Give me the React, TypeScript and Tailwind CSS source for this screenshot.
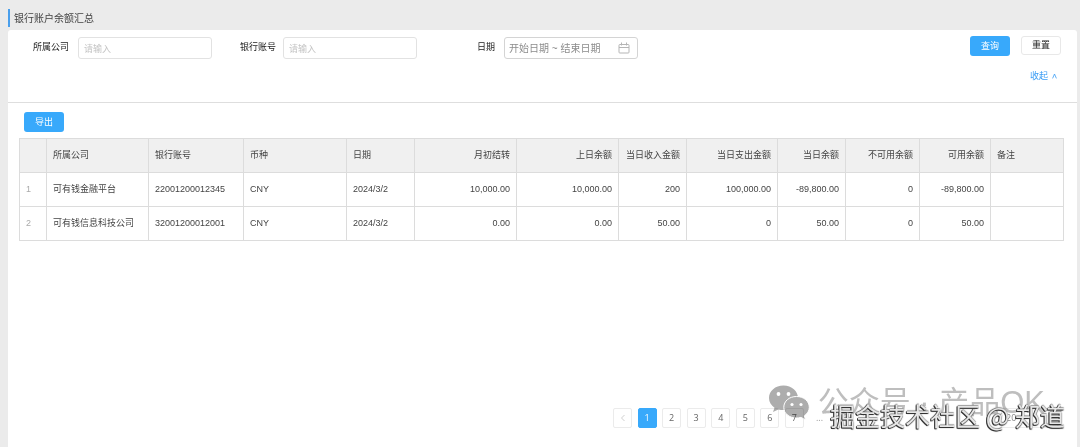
import { useState } from "react";

interface AccountRow {
  company: string;
  account: string;
  currency: string;
  date: string;
  amounts: string[];
}

const columns = [
  { title: "", width: "w-[27px]", right: false },
  { title: "所属公司", width: "w-[102px]", right: false },
  { title: "银行账号", width: "w-[95px]", right: false },
  { title: "币种", width: "w-[103px]", right: false },
  { title: "日期", width: "w-[68px]", right: false },
  { title: "月初结转", width: "w-[102px]", right: true },
  { title: "上日余额", width: "w-[102px]", right: true },
  { title: "当日收入金额", width: "w-[68px]", right: true },
  { title: "当日支出金额", width: "w-[91px]", right: true },
  { title: "当日余额", width: "w-[68px]", right: true },
  { title: "不可用余额", width: "w-[74px]", right: true },
  { title: "可用余额", width: "w-[71px]", right: true },
  { title: "备注", width: "w-[73px]", right: false },
];

const rows: AccountRow[] = [
  {
    company: "可有钱金融平台",
    account: "22001200012345",
    currency: "CNY",
    date: "2024/3/2",
    amounts: ["10,000.00", "10,000.00", "200", "100,000.00", "-89,800.00", "0", "-89,800.00"],
  },
  {
    company: "可有钱信息科技公司",
    account: "32001200012001",
    currency: "CNY",
    date: "2024/3/2",
    amounts: ["0.00", "0.00", "50.00", "0", "50.00", "0", "50.00"],
  },
];

const pages = [1, 2, 3, 4, 5, 6, 7];

function SearchForm() {
  const inputClass =
    "h-[22px] w-[134px] rounded-[3px] border border-[#e2e2e2] bg-white px-[5px] pt-0.5 text-[9px] text-[#333] outline-none placeholder:text-[#c4c4c4]";

  return (
    <form
      onSubmit={(e) => e.preventDefault()}
      className="flex items-start border-b border-[#dedede] pt-1.5 pr-4 pb-[18px] pl-[25px] text-[9px] text-[#222]"
    >
      <div className="flex flex-wrap gap-7 pt-px">
        <div className="flex gap-[9px]">
          <label htmlFor="company" className="leading-5">所属公司</label>
          <input id="company" type="text" placeholder="请输入" className={inputClass} />
        </div>
        <div className="flex gap-[7px]">
          <label htmlFor="account" className="leading-5">银行账号</label>
          <input id="account" type="text" placeholder="请输入" className={inputClass} />
        </div>
        <div className="ml-8 flex gap-[9px]">
          <label htmlFor="date" className="leading-5">日期</label>
          <div className="flex h-[22px] w-[134px] items-center rounded-[3px] border border-[#d4d4d4] pr-[7px] pl-1">
            <input
              id="date"
              type="text"
              placeholder="开始日期 ~ 结束日期"
              className="w-full min-w-0 text-[10px] outline-none placeholder:text-[#8c8c8c]"
            />
            <svg viewBox="0 0 12 12" className="size-3 shrink-0" fill="none" stroke="#b5b5b5">
              <rect x="1" y="2.5" width="10" height="8.5" rx="0.8" />
              <path d="M1 5.5h10M3.5 0.5v3M8.5 0.5v3" />
            </svg>
          </div>
        </div>
      </div>
      <div className="ml-auto flex flex-col items-end gap-3">
        <div className="flex gap-[11px]">
          <button type="submit" className="h-5 w-10 rounded-[3px] bg-[#38a9fb] pt-0.5 text-white">
            查询
          </button>
          <button type="reset" className="h-[19px] w-10 rounded-[3px] border border-[#e8e8e8] bg-white">
            重置
          </button>
        </div>
        <a href="#" className="mr-1 flex items-center gap-1 leading-4 text-[#3a9df5]">
          收起
          <svg viewBox="0 0 5 6" className="h-1.5 w-[5px]" fill="none" stroke="currentColor" strokeWidth="0.8">
            <path d="M0.6 5.4L2.5 1L4.400 5.4" />
          </svg>
        </a>
      </div>
    </form>
  );
}

function BalanceTable() {
  return (
    <table className="w-full table-fixed border-collapse text-[9px] text-[#444]">
      <thead>
        <tr className="h-[34px] bg-[#f0f0f0]">
          {columns.map((col, i) => (
            <th
              key={i}
              className={`border border-[#dcdcdc] px-1.5 font-normal whitespace-nowrap ${col.width} ${
                col.right ? "text-right" : "text-left"
              }`}
            >
              {col.title}
            </th>
          ))}
        </tr>
      </thead>
      <tbody>
        {rows.map((row, i) => (
          <tr key={row.account} className="h-[34px]">
            <td className="border border-[#dcdcdc] px-1.5 text-[#aaa]">{i + 1}</td>
            <td className="border border-[#dcdcdc] px-1.5 whitespace-nowrap">{row.company}</td>
            <td className="border border-[#dcdcdc] px-1.5">{row.account}</td>
            <td className="border border-[#dcdcdc] px-1.5">{row.currency}</td>
            <td className="border border-[#dcdcdc] px-1.5">{row.date}</td>
            {row.amounts.map((amount, j) => (
              <td key={j} className="border border-[#dcdcdc] px-1.5 text-right">
                {amount}
              </td>
            ))}
            <td className="border border-[#dcdcdc] px-1.5" />
          </tr>
        ))}
      </tbody>
    </table>
  );
}

function Pagination() {
  const [current, setCurrent] = useState<number>(1);

  return (
    <nav className="flex items-center font-['Open_Sans','Noto_Sans_CJK_SC',sans-serif] text-[9px] text-[#666]">
      <div className="flex w-[191px] justify-between">
        <button
          aria-label="上一页"
          onClick={() => setCurrent(Math.max(1, current - 1))}
          className="flex h-5 w-[19px] items-center justify-center rounded-[2px] border border-[#ebebeb]"
        >
          <svg viewBox="0 0 6 8" className="h-2 w-1.5" fill="none" stroke="#d0d0d0">
            <path d="M4.5 1L1.5 4L4.5 7" />
          </svg>
        </button>
        {pages.map((page) => (
          <button
            key={page}
            onClick={() => setCurrent(page)}
            className={`flex h-5 w-[19px] items-center justify-center rounded-[2px] border ${
              page === current ? "border-[#38a9fb] bg-[#38a9fb] text-white" : "border-[#ebebeb]"
            }`}
          >
            {page}
          </button>
        ))}
      </div>
      <span className="ml-3 w-[18px] text-[#999]">...</span>
      <button
        aria-label="下一页"
        onClick={() => setCurrent(Math.min(7, current + 1))}
        className="h-5 w-[19px] rounded-[2px] border border-[#ebebeb]"
      />
      <select
        aria-label="每页条数"
        className="ml-auto h-5 w-12 appearance-none rounded-[2px] border border-[#ebebeb] px-1 text-[#888]"
      >
        <option>20</option>
      </select>
    </nav>
  );
}

function Watermarks() {
  return (
    <>
      <div className="pointer-events-none absolute right-[35px] bottom-[27px] flex items-center gap-2 text-[31px] leading-8 whitespace-nowrap text-[#bebebe] mix-blend-multiply select-none">
        <svg viewBox="0 0 42 35" className="h-[35px] w-[42px]">
          <path
            fill="#adadad"
            d="M15.5 0.5C7.2 0.5 1 6 1 13c0 4 2.200 7.400 5.500 9.700L5 27l5.300-2.600c1.700.5 3.400.7 5.200.7C23.800 25.100 30 19.700 30 13S23.800.5 15.500.5z"
          />
          <path
            fill="#adadad"
            stroke="#fff"
            d="M28.500 11.500c-7.300 0-12.700 4.700-12.700 10.800s5.400 10.700 12.700 10.700c1.500 0 3-.2 4.400-.6l4.700 2.400-1.200-4c3-2 4.900-5 4.900-8.500 0-6.100-5.500-10.800-12.800-10.800z"
          />
          <g fill="#fff">
            <circle cx="10.500" cy="9" r="1.900" />
            <circle cx="20.500" cy="9" r="1.900" />
            <circle cx="24" cy="19.500" r="1.600" />
            <circle cx="33" cy="19.500" r="1.600" />
          </g>
        </svg>
        <span>公众号 · 产品OK</span>
      </div>
      <div className="pointer-events-none absolute right-[15px] bottom-3.5 font-['Noto_Sans_CJK_SC',sans-serif] text-[25px] leading-9 whitespace-nowrap text-[#e6e6e6] select-none [text-shadow:-1px_1px_0_#333,0_1px_1px_#555,-1px_0_0_#555,0_-1px_1px_#999]">
        掘金技术社区 @ 郑道
      </div>
    </>
  );
}

function App() {
  return (
    <div className="relative flex min-h-screen flex-col bg-[#ebebeb] pr-[3px] pl-2 font-['Liberation_Sans','Noto_Sans_CJK_SC',sans-serif]">
      <header className="pt-[9px] pb-[3px]">
        <h1 className="border-l-2 border-[#4a9fec] pt-0.5 pl-1 text-[10px] leading-4 text-[#444]">
          银行账户余额汇总
        </h1>
      </header>
      <main className="flex flex-1 flex-col rounded-t-[3px] bg-white">
        <SearchForm />
        <section className="flex flex-1 flex-col pr-[13px] pl-[11px]">
          <div className="px-[5px] pt-[9px] pb-1.5">
            <button className="block h-5 w-10 rounded-[3px] bg-[#38a9fb] pt-0.5 text-[9px] text-white">
              导出
            </button>
          </div>
          <BalanceTable />
          <div className="mt-auto flex justify-end pr-[15px] pb-[19px]">
            <div className="w-[436px]">
              <Pagination />
            </div>
          </div>
        </section>
      </main>
      <Watermarks />
    </div>
  );
}

export default App;
